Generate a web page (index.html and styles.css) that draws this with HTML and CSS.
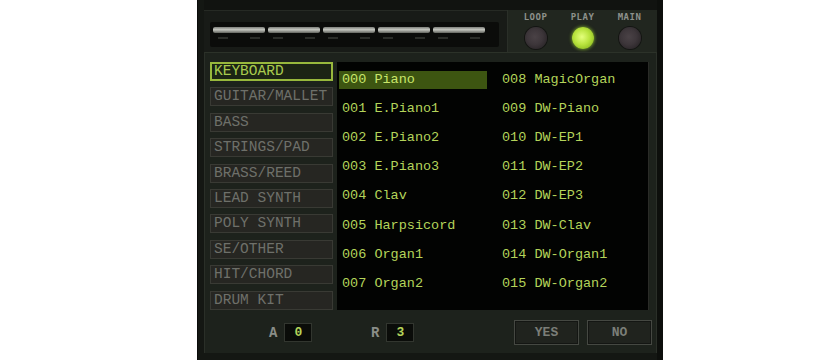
FILE: index.html
```html
<!DOCTYPE html>
<html>
<head>
<meta charset="utf-8">
<link rel="stylesheet" href="styles.css">
</head>
<body>
<div class="device">
  <div class="top">
    <div class="slots">
      <div class="slot"><div class="bar"></div><div class="ticks"><span></span><span></span></div></div>
      <div class="slot"><div class="bar"></div><div class="ticks"><span></span><span></span></div></div>
      <div class="slot"><div class="bar"></div><div class="ticks"><span></span><span></span></div></div>
      <div class="slot"><div class="bar"></div><div class="ticks"><span></span><span></span></div></div>
      <div class="slot"><div class="bar"></div><div class="ticks"><span></span><span></span></div></div>
    </div>
    <div class="switches">
      <div class="sw"><div class="sw-label">LOOP</div><div class="led off"></div></div>
      <div class="sw"><div class="sw-label">PLAY</div><div class="led on"></div></div>
      <div class="sw"><div class="sw-label">MAIN</div><div class="led off"></div></div>
    </div>
  </div>
  <div class="main">
    <div class="body">
      <div class="cats">
        <div class="cat active">KEYBOARD</div>
        <div class="cat">GUITAR/MALLET</div>
        <div class="cat">BASS</div>
        <div class="cat">STRINGS/PAD</div>
        <div class="cat">BRASS/REED</div>
        <div class="cat">LEAD SYNTH</div>
        <div class="cat">POLY SYNTH</div>
        <div class="cat">SE/OTHER</div>
        <div class="cat">HIT/CHORD</div>
        <div class="cat">DRUM KIT</div>
      </div>
      <div class="list">
        <div class="prog sel">000 Piano</div>
        <div class="prog">008 MagicOrgan</div>
        <div class="prog">001 E.Piano1</div>
        <div class="prog">009 DW-Piano</div>
        <div class="prog">002 E.Piano2</div>
        <div class="prog">010 DW-EP1</div>
        <div class="prog">003 E.Piano3</div>
        <div class="prog">011 DW-EP2</div>
        <div class="prog">004 Clav</div>
        <div class="prog">012 DW-EP3</div>
        <div class="prog">005 Harpsicord</div>
        <div class="prog">013 DW-Clav</div>
        <div class="prog">006 Organ1</div>
        <div class="prog">014 DW-Organ1</div>
        <div class="prog">007 Organ2</div>
        <div class="prog">015 DW-Organ2</div>
      </div>
    </div>
    <div class="footer">
      <div class="field"><span class="flabel">A</span><span class="fval">0</span></div>
      <div class="field"><span class="flabel">R</span><span class="fval">3</span></div>
      <div class="btns">
        <div class="btn">YES</div>
        <div class="btn">NO</div>
      </div>
    </div>
  </div>
</div>
</body>
</html>
```
FILE: styles.css
```css
html, body {
  margin: 0;
  padding: 0;
  background: #ffffff;
}
.device {
  margin-left: 197px;
  width: 466px;
  height: 360px;
  box-sizing: border-box;
  background: #141713;
  border-left: 1px solid #0a0b0a;
  border-right: 6px solid #0d0f0c;
  padding: 0 0 0 6px;
  display: flex;
  flex-direction: column;
  font-family: "Liberation Mono", "DejaVu Sans Mono", monospace;
}
.top {
  height: 52px;
  display: flex;
  align-items: flex-start;
  box-sizing: border-box;
  border-top: 10px solid #111310;
  box-shadow: inset 0 1px 0 #262a24;
  background: #181b17;
}
.slots {
  margin-top: 12px;
  margin-left: 6px;
  width: 289px;
  height: 25px;
  background: #0b0c0a;
  border-radius: 2px;
  display: flex;
  gap: 3px;
  padding: 0 3px;
  box-sizing: border-box;
}
.slot {
  width: 52px;
  display: flex;
  flex-direction: column;
  padding-top: 5px;
  box-sizing: border-box;
}
.bar {
  height: 6px;
  border-radius: 2px;
  background: linear-gradient(#7d7f7a, #c4c6bf 45%, #62645e);
}
.ticks {
  display: flex;
  justify-content: space-between;
  padding: 4px 5px 0;
}
.ticks span {
  width: 10px;
  height: 2px;
  background: #2b2d29;
}
.switches {
  margin-left: auto;
  margin-top: 0;
  width: 150px;
  height: 42px;
  background: #21261f;
  border-left: 1px solid #2a2f28;
  display: flex;
  justify-content: space-around;
  padding: 0 4px;
  box-sizing: border-box;
}
.sw {
  display: flex;
  flex-direction: column;
  align-items: center;
  width: 44px;
}
.sw-label {
  font-family: "DejaVu Sans Mono", monospace;
  font-size: 9px;
  font-weight: bold;
  letter-spacing: 0.5px;
  color: #8d918b;
  line-height: 10px;
  margin-top: 2px;
}
.led {
  margin-top: 5px;
  width: 22px;
  height: 22px;
  border-radius: 50%;
  box-shadow: 0 0 0 1px #141513;
}
.led.off {
  background: radial-gradient(circle at 45% 45%, #4a4246 0%, #3d363a 45%, #2a2528 80%, #1a1719 100%);
}
.led.on {
  background: radial-gradient(circle at 45% 45%, #e4ff7c 0%, #b9e43e 45%, #8ebd22 80%, #5d7f14 100%);
  box-shadow: 0 0 3px 1px rgba(160, 220, 50, 0.5);
}
.main {
  flex: 1;
  margin-right: 0;
  background: #1d221c;
  border-top: 1px solid #2c3229;
  border-left: 1px solid #2a2f28;
  border-right: 1px solid #2a2f28;
  margin-bottom: 7px;
  display: flex;
  flex-direction: column;
}
.body {
  display: flex;
  padding: 9px 0 0 5px;
}
.cats {
  width: 123px;
  display: flex;
  flex-direction: column;
  gap: 6.4px;
}
.cat {
  height: 19px;
  box-sizing: border-box;
  border: 1px solid #393a34;
  background: #262622;
  color: #6e706a;
  font-size: 14.5px;
  line-height: 17px;
  padding-left: 3px;
  white-space: nowrap;
  overflow: hidden;
}
.cat.active {
  border: 2px solid #98b83c;
  background: #1c2414;
  color: #a9cb4e;
  line-height: 15px;
  padding-left: 2px;
}
.list {
  margin-left: 4px;
  width: 312px;
  height: 248px;
  background: #020302;
  display: grid;
  grid-template-columns: 148px 1fr;
  grid-auto-rows: 29.2px;
  column-gap: 12px;
  padding: 3px 0 0 2px;
  box-sizing: border-box;
  border-right: 1px solid #2a2b27;
}
.prog {
  align-self: center;
  height: 18px;
  line-height: 18px;
  font-size: 13.5px;
  color: #b4d45a;
  padding-left: 3px;
  white-space: nowrap;
}
.prog.sel {
  background: #3d5511;
  color: #c9e66a;
}
.footer {
  display: flex;
  align-items: center;
  height: 35px;
  margin-top: 5px;
  padding: 0 4px 0 64px;
}
.field {
  display: flex;
  align-items: center;
  gap: 7px;
  width: 102px;
}
.flabel {
  color: #8a8e88;
  font-size: 14px;
  font-weight: bold;
}
.fval {
  width: 26px;
  height: 17px;
  background: #0a0c09;
  border: 1px solid #32362f;
  color: #b4d45a;
  font-size: 13px;
  font-weight: bold;
  line-height: 17px;
  text-align: center;
}
.btns {
  margin-left: auto;
  display: flex;
  gap: 8px;
}
.btn {
  width: 63px;
  height: 23px;
  background: #20231e;
  border: 1px solid #454842;
  box-shadow: inset 0 0 0 1px #141613;
  color: #7b7e78;
  font-size: 13px;
  font-weight: bold;
  line-height: 23px;
  text-align: center;
}
```
